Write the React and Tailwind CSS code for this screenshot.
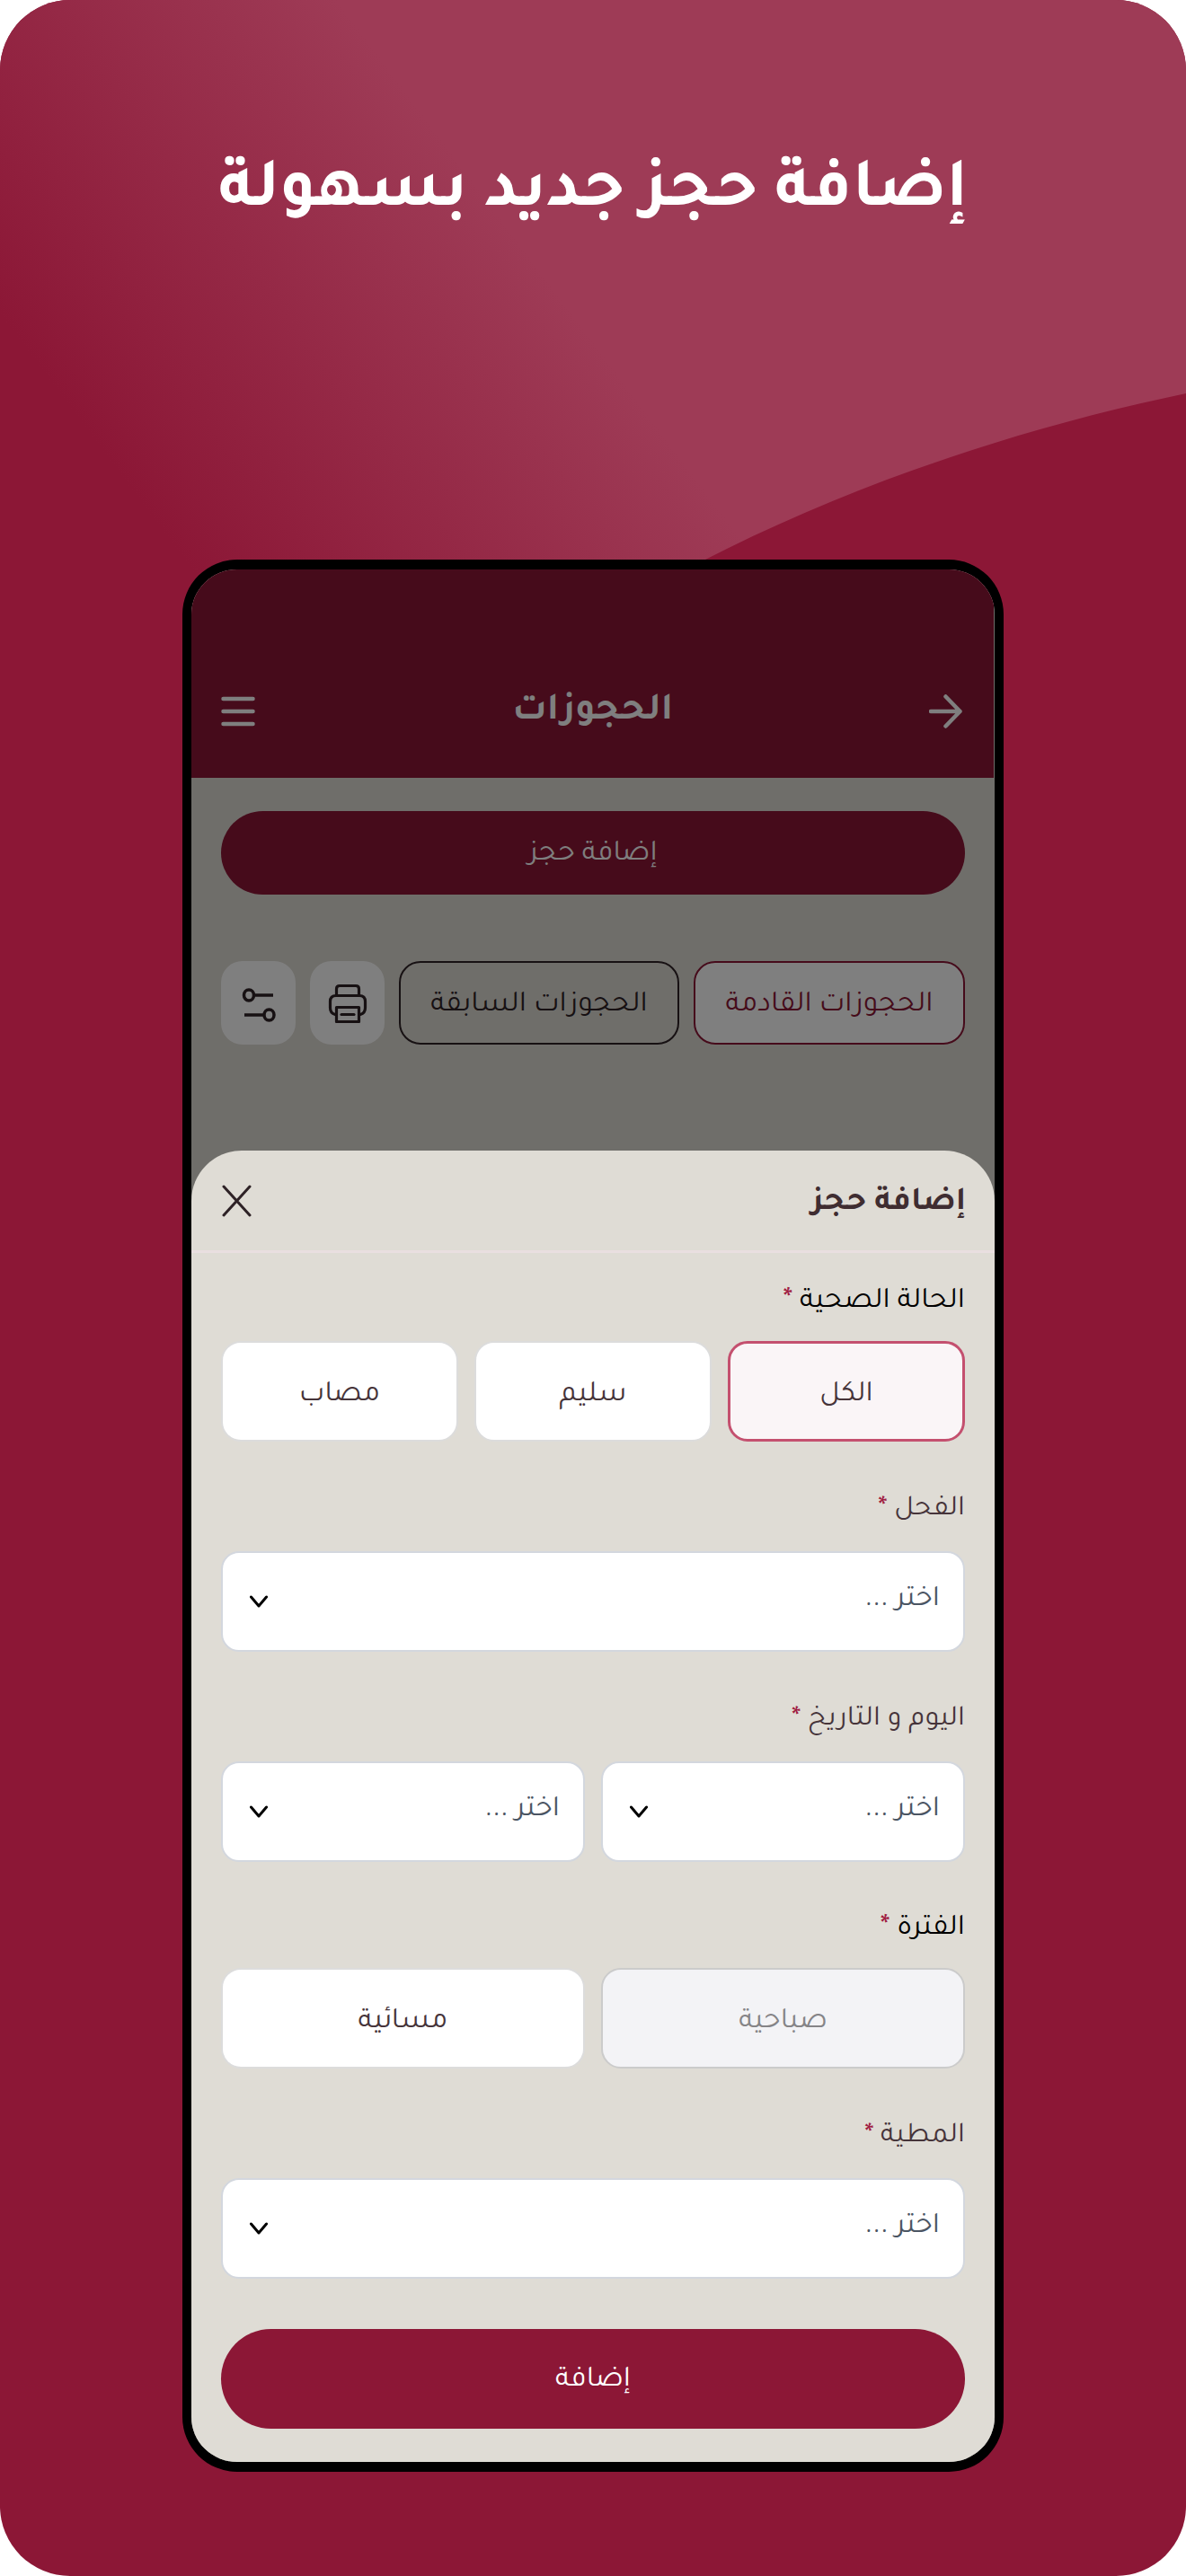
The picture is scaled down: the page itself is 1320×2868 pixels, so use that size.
import React, { useState } from 'react';

const healthOptions = [
  { id: 'all', label: 'الكل' },
  { id: 'healthy', label: 'سليم' },
  { id: 'injured', label: 'مصاب' },
];

const Backdrop = () => (
  <svg className="absolute inset-x-0 top-0 w-full" viewBox="0 0 1320 700" aria-hidden="true">
    <defs>
      <linearGradient id="glow" gradientUnits="userSpaceOnUse" x1="0" y1="350" x2="408" y2="44">
        <stop offset="0" stopColor="#8c1736" />
        <stop offset="1" stopColor="#9e3b56" />
      </linearGradient>
    </defs>
    <path d="M0 0H1320V438C1110 482 930 549 785 623L640 700H0Z" fill="url(#glow)" />
  </svg>
);

const ArrowIcon = () => (
  <svg className="h-10 w-10" viewBox="0 0 40 40" fill="none" stroke="currentColor" strokeWidth="4.5" strokeLinecap="round" strokeLinejoin="round">
    <path d="M2 20H34.5M18.500 3.500L34.500 20L18.500 36.500" />
  </svg>
);

const MenuIcon = () => (
  <svg className="h-10 w-10" viewBox="0 0 40 40" fill="none" stroke="currentColor" strokeWidth="4.5" strokeLinecap="round">
    <path d="M3.500 6H36.500M3.500 20H36.500M3.500 34H36.500" />
  </svg>
);

const PrinterIcon = () => (
  <svg className="h-11 w-11" viewBox="0 0 44 44" fill="none" stroke="currentColor" strokeWidth="3.2" strokeLinejoin="round">
    <path d="M9.5 14V6Q9.5 2.5 13 2.5H31Q34.5 2.5 34.5 6V14" />
    <path d="M9.5 34.500H8Q2.500 33 2.500 27V20Q2.500 13.500 9 13.500H35Q41.500 13.500 41.500 20V27Q41.500 33 36 34.500H34.500" />
    <path d="M9.500 26.500H34.500V42.500H9.500Z" />
    <path d="M15 34.500H29" strokeLinecap="round" />
  </svg>
);

const FilterIcon = () => (
  <svg className="h-10 w-10" viewBox="0 0 40 40" fill="none" stroke="currentColor" strokeWidth="3.5">
    <ellipse cx="9" cy="9" rx="5.500" ry="6" />
    <path d="M14.500 9H36" />
    <ellipse cx="31.500" cy="31" rx="5.500" ry="6" />
    <path d="M4 31H26" />
  </svg>
);

const CloseIcon = () => (
  <svg className="h-10 w-10" viewBox="0 0 40 40" fill="none" stroke="currentColor" strokeWidth="3" strokeLinecap="round">
    <path d="M4 4L33 36M33 4L4 36" />
  </svg>
);

const Label = ({ htmlFor, id, children, dark }) => {
  const Tag = htmlFor ? 'label' : 'div';
  return (
    <Tag id={id} htmlFor={htmlFor} className={`block h-12 pt-1 leading-[48px] ${dark ? 'text-[33px] text-black' : 'text-[32px] text-[#46343a]'}`}>
      {children} <span className="font-medium text-[#a01c42]">*</span>
    </Tag>
  );
};

const Select = ({ id, label }) => (
  <div className="relative flex-1">
    <select
      id={id}
      aria-label={label}
      className="block h-28 w-full appearance-none rounded-[20px] border-2 border-[#d3d7de] bg-white pr-[26px] pl-20 text-[33px] text-[#4b5563]"
    >
      <option>اختر ...</option>
    </select>
    <svg className="pointer-events-none absolute top-1/2 left-8 h-5 w-5 -translate-y-1/2" viewBox="0 0 20 20" fill="none" stroke="#000" strokeWidth="3" strokeLinecap="round" strokeLinejoin="round">
      <path d="M1.500 5L10 15L18.500 5" />
    </svg>
  </div>
);

const App = () => {
  const [health, setHealth] = useState('all');

  return (
    <div dir="rtl" className="bg-white font-[Tajawal,'Noto_Sans',sans-serif]">
      <main className="relative overflow-hidden rounded-[78px] bg-[#8c1736] px-8 pb-[116px]">
        <Backdrop />

        <h1 className="relative flex h-[623px] items-start justify-center pt-[162px] text-center text-[78px] leading-[110px] font-bold text-white">
          إضافة حجز جديد بسهولة
        </h1>

        {/* Phone */}
        <div className="relative mx-auto max-w-[914px] overflow-hidden rounded-[61px] border-x-[10px] border-y-[11px] border-black bg-[#dfdcd5]">
          <header className="mr-px flex h-[232px] items-end justify-between bg-[#8c1736] px-8 pb-[54px] text-white">
            <button type="button" aria-label="رجوع"><ArrowIcon /></button>
            <h2 className="text-[43px] leading-9 font-bold">الحجوزات</h2>
            <button type="button" aria-label="القائمة"><MenuIcon /></button>
          </header>

          <div className="px-[33px] pt-[37px] pb-[118px]">
            <button type="button" className="h-[93px] w-full rounded-full bg-[#8c1736] pt-1.5 text-[33px] text-white">
              إضافة حجز
            </button>
            <div className="mt-[74px] flex h-[93px] gap-4">
              <button type="button" className="flex-[301] rounded-3xl border-2 border-[#8c1736] bg-white pt-2 text-[33px] text-[#8c1736]">
                الحجوزات القادمة
              </button>
              <button type="button" className="flex-[311] rounded-3xl border-2 border-[#2e2226] pt-2 text-[33px] text-[#2e2226]">
                الحجوزات السابقة
              </button>
              <button type="button" aria-label="طباعة" className="flex w-[83px] items-center justify-center rounded-3xl bg-white text-[#2e2226]">
                <PrinterIcon />
              </button>
              <button type="button" aria-label="تصفية" className="flex w-[83px] items-center justify-center rounded-3xl bg-white pt-1 text-[#2e2226]">
                <FilterIcon />
              </button>
            </div>
          </div>

          <div className="absolute inset-0 bg-black/50" />

          {/* Bottom sheet */}
          <section className="relative rounded-t-[56px] bg-[#dfdcd5]">
            <div className="flex h-[114px] items-center justify-between border-b-[3px] border-[#e9dfe0] px-8">
              <h3 className="pt-2 text-[37px] leading-[48px] font-bold text-[#3f2d31]">إضافة حجز</h3>
              <button type="button" aria-label="إغلاق" className="text-[#2e2226]"><CloseIcon /></button>
            </div>

            <form className="flex flex-col gap-12 px-[33px] pt-7 pb-[37px]" onSubmit={(e) => e.preventDefault()}>
              <div role="group" aria-labelledby="health-label">
                <Label id="health-label" dark>الحالة الصحية</Label>
                <div className="mt-[22px] grid grid-cols-3 gap-[18px]">
                  {healthOptions.map((option) => (
                    <button
                      key={option.id}
                      type="button"
                      aria-pressed={health === option.id}
                      onClick={() => setHealth(option.id)}
                      className={`h-28 rounded-[22px] pt-3 text-[33px] text-[#46343a] ${
                        health === option.id
                          ? 'border-[3px] border-[#c4506f] bg-[#faf5f7]'
                          : 'border-2 border-[#dcdcdc] bg-white'
                      }`}
                    >
                      {option.label}
                    </button>
                  ))}
                </div>
              </div>

              <div>
                <Label htmlFor="stallion">الفحل</Label>
                <div className="mt-[26px] flex">
                  <Select id="stallion" />
                </div>
              </div>

              <div>
                <Label htmlFor="day">اليوم و التاريخ</Label>
                <div className="mt-[26px] flex gap-[18px]">
                  <Select id="day" />
                  <Select id="date" label="التاريخ" />
                </div>
              </div>

              <div role="group" aria-labelledby="period-label">
                <Label id="period-label" dark>الفترة</Label>
                <div className="mt-[22px] grid grid-cols-2 gap-[18px]">
                  <button type="button" disabled className="h-28 rounded-[22px] border-2 border-[#cbcbcb] bg-[#f3f3f6] pt-3 text-[33px] text-[#858487]">
                    صباحية
                  </button>
                  <button type="button" className="h-28 rounded-[22px] border-2 border-[#dcdcdc] bg-white pt-3 text-[33px] text-[#46343a]">
                    مسائية
                  </button>
                </div>
              </div>

              <div>
                <Label htmlFor="mare">المطية</Label>
                <div className="mt-[26px] flex">
                  <Select id="mare" />
                </div>
              </div>

              <button type="submit" className="mt-2 h-[111px] w-full rounded-full bg-[#8c1736] pt-1.5 text-[33px] text-white">
                إضافة
              </button>
            </form>
          </section>
        </div>
      </main>
    </div>
  );
};

export default App;
